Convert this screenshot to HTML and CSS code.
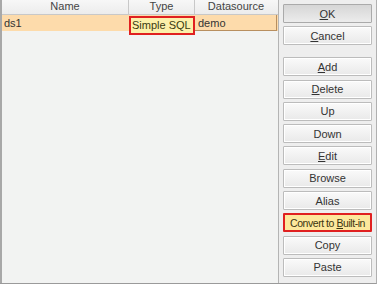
FILE: index.html
```html
<!DOCTYPE html>
<html>
<head>
<meta charset="utf-8">
<link rel="stylesheet" href="styles.css">
</head>
<body>
<div class="dialog">
  <div class="table">
    <div class="thead">
      <div class="th c1">Name</div>
      <div class="th c2">Type</div>
      <div class="th c3">Datasource</div>
    </div>
    <div class="row">
      <div class="td c1">ds1</div>
      <div class="td c2 hl">Simple SQL</div>
      <div class="td c3 ds">demo</div>
    </div>
  </div>
  <div class="side">
    <div class="group">
      <button class="btn def"><u>O</u>K</button>
      <button class="btn"><u>C</u>ancel</button>
    </div>
    <div class="group">
      <button class="btn"><u>A</u>dd</button>
      <button class="btn"><u>D</u>elete</button>
      <button class="btn">Up</button>
      <button class="btn">Down</button>
      <button class="btn"><u>E</u>dit</button>
      <button class="btn">Browse</button>
      <button class="btn">Alias</button>
      <button class="btn hlbtn">Convert to <u>B</u>uilt-in</button>
      <button class="btn">Copy</button>
      <button class="btn">Paste</button>
    </div>
  </div>
</div>
</body>
</html>
```
FILE: styles.css
```css
html, body {
  margin: 0;
  padding: 0;
  background: #ffffff;
}
body {
  font-family: "Liberation Sans", Arial, sans-serif;
  font-size: 11px;
  color: #222;
}
.dialog {
  display: flex;
  width: 377px;
  height: 284px;
  border-bottom: 1px solid #9a9a9a;
  border-right: 1px solid #b0b0b0;
  box-sizing: border-box;
  background: #eeeeee;
}
.table {
  width: 279px;
  background: #f2f3f2;
  border-left: 2px solid #a8a8a8;
  border-right: 1px solid #b4b4b4;
  box-sizing: border-box;
}
.thead {
  display: flex;
  height: 14px;
  background: linear-gradient(#f7f7f7, #ececec);
  border-bottom: 1px solid #c8c8c8;
}
.th {
  text-align: center;
  line-height: 13px;
  color: #444;
  border-right: 1px solid #c8c8c8;
  box-sizing: border-box;
}
.c1 { width: 127px; }
.c2 { width: 66px; }
.c3 { width: 82px; }
.thead .c3 { border-right: none; }
.row {
  display: flex;
  height: 16px;
  background: #fddbab;
}
.td {
  line-height: 16px;
  padding-left: 2px;
  box-sizing: border-box;
  color: #333;
}
.td.hl {
  background: #fcf0aa;
  border: 2px solid #e02020;
  height: 19px;
  line-height: 15px;
  padding-left: 1px;
  margin-top: 1px;
  position: relative;
  z-index: 1;
  color: #3a3a10;
}
.td.ds {
  border-bottom: 1px solid #b88f60;
  border-right: 1px solid #b88f60;
  padding-left: 3px;
}
.side {
  flex: 1;
  display: flex;
  flex-direction: column;
  padding: 4px 0 0 4px;
  gap: 12px;
}
.group {
  display: flex;
  flex-direction: column;
  gap: 3.3px;
}
.btn {
  width: 89px;
  height: 19px;
  padding: 0;
  margin: 0;
  white-space: nowrap;
  font-family: "Liberation Sans", Arial, sans-serif;
  font-size: 11px;
  color: #333;
  background: linear-gradient(#fafafa, #e9e9e9);
  border: 1px solid #bcbcbc;
  border-radius: 1px;
  box-shadow: inset 0 0 0 1px #ffffff;
}
.btn.def {
  background: linear-gradient(#d6d6d6, #ececec);
  border-color: #aaaaaa;
  box-shadow: none;
}
.btn.hlbtn {
  background: #fde89c;
  border: 2px solid #e02020;
  box-shadow: none;
  color: #3a3410;
  letter-spacing: -0.45px;
  font-size: 10.5px;
}
```
